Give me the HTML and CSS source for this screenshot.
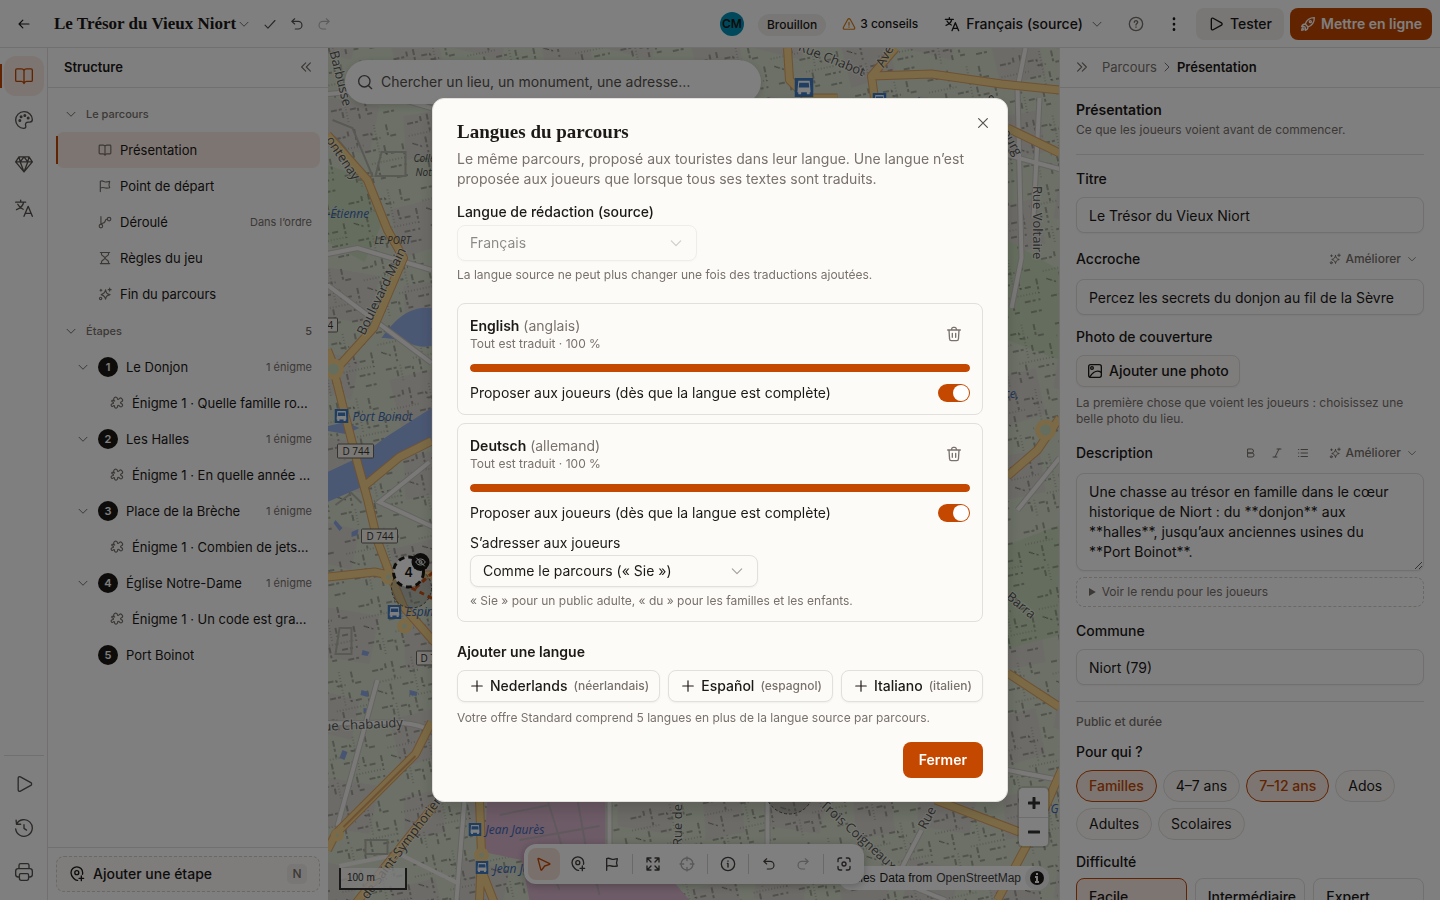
FILE: index.html
```html
<!DOCTYPE html>
<html lang="fr">
<head>
<meta charset="utf-8">
<meta name="viewport" content="width=device-width, initial-scale=1">
<title>Le Trésor du Vieux Niort</title>
<link rel="stylesheet" href="styles.css">
</head>
<body>
<svg class="sprite" aria-hidden="true">
  <symbol id="i-back" viewBox="0 0 24 24"><path d="M20.500 12H3.500M10 5.500L3.500 12l6.500 6.500"/></symbol>
  <symbol id="i-down" viewBox="0 0 24 24"><path d="M4 8.500l8 8 8-8"/></symbol>
  <symbol id="i-right" viewBox="0 0 24 24"><path d="M8 4l8 8-8 8"/></symbol>
  <symbol id="i-check" viewBox="0 0 24 24"><path d="M3.500 14l5 5L20.500 6"/></symbol>
  <symbol id="i-undo" viewBox="0 0 24 24"><path d="M8 3L3 7.500 8 12M3.500 7.500h10.500a6.500 6.500 0 0 1 0 13H9"/></symbol>
  <symbol id="i-redo" viewBox="0 0 24 24"><path d="M16 3l5 4.500L16 12M20.500 7.500H10a6.500 6.500 0 0 0 0 13h5"/></symbol>
  <symbol id="i-book" viewBox="0 0 24 24"><path d="M12 5.500V21M12 5.500C11.500 4 10.500 3.500 9 3.500H3.500a1.500 1.500 0 0 0-1.500 1.500v12a1.500 1.500 0 0 0 1.500 1.500H9c1.800 0 2.500 1 3 2.500.500-1.500 1.200-2.500 3-2.500h5.500A1.500 1.500 0 0 0 22 17V5a1.500 1.500 0 0 0-1.500-1.500H15c-1.500 0-2.500.500-3 2z"/></symbol>
  <symbol id="i-palette" viewBox="0 0 24 24"><path d="M22 11.500C22 6 17.500 2 12 2S2 6.500 2 12s4.500 10 9.500 10c2.500 0 3-1.500 2.500-3-.800-2.500.500-4.500 3-4.500h2c2 0 3-1 3-3z"/><circle cx="7" cy="12.500" r="1"/><circle cx="8.500" cy="8" r="1"/><circle cx="13" cy="6.500" r="1"/><circle cx="17" cy="9.500" r="1"/></symbol>
  <symbol id="i-gem" viewBox="0 0 24 24"><path d="M6 3.500h12l4 6L12 21.500 2 9.500zM2 9.500h20M12 3.500l-4.500 6 4.500 12 4.500-12zM6 3.500l1.500 6M18 3.500l-1.500 6"/></symbol>
  <symbol id="i-lang" viewBox="0 0 24 24"><path d="M2 5h12M8 2.500V5M11.500 5C11 9 7 12.500 3 14M4.500 7.500C6 10.500 8.500 12.500 11 13.500M12 22l5-12 5 12M13.500 18.500h7"/></symbol>
  <symbol id="i-play" viewBox="0 0 24 24"><path d="M5 5v14c0 1.500 1.300 2.300 2.700 1.600l12.500-7c1.300-.700 1.300-2.500 0-3.200L7.700 3.400C6.300 2.700 5 3.500 5 5z"/></symbol>
  <symbol id="i-history" viewBox="0 0 24 24"><path d="M3 7.500A10 10 0 1 1 2 13M2.500 2.500L3 7.500h5M12 8v4.500l3 2"/></symbol>
  <symbol id="i-print" viewBox="0 0 24 24"><path d="M6 8V4c0-1.200.500-2 2-2h8c1.500 0 2 .800 2 2v4M6.500 18H5c-2 0-3-1-3-3v-4c0-2 1-3 3-3h14c2 0 3 1 3 3v4c0 2-1 3-3 3h-1.500M8 14h8c1 0 1.500.500 1.500 1.500v4c0 1.500-.500 2.500-2 2.500h-7c-1.500 0-2-1-2-2.500v-4C6.500 14.500 7 14 8 14z"/></symbol>
  <symbol id="i-dleft" viewBox="0 0 24 24"><path d="M11.500 5l-7 7 7 7M19.500 5l-7 7 7 7"/></symbol>
  <symbol id="i-dright" viewBox="0 0 24 24"><path d="M4.500 5l7 7-7 7M12.500 5l7 7-7 7"/></symbol>
  <symbol id="i-flag" viewBox="0 0 24 24"><path d="M4 21.500V4c4-2.500 7 2 11 1 2-.500 3.500-1 5-1-1.500 4-1.500 7.500 0 11-4 1-6 1-9 0s-5-.500-7 .500"/></symbol>
  <symbol id="i-branch" viewBox="0 0 24 24"><circle cx="5" cy="19" r="3"/><circle cx="19" cy="7" r="3"/><path d="M5 16V2.500M16 7c-3 0-3 .500-3.500 3S10.500 14 5 15"/></symbol>
  <symbol id="i-glass" viewBox="0 0 24 24"><path d="M4 2.500h16M4 21.500h16M6 2.500v3c0 3 6 4 6 6.500s-6 3.500-6 6.500v3M18 2.500v3c0 3-6 4-6 6.500s6 3.500 6 6.500v3"/></symbol>
  <symbol id="i-spark" viewBox="0 0 24 24"><path d="M13 5c1 5 2 6.500 7.500 8C15 14.500 14 16 13 21c-1-5-2.500-6.500-7.500-8C10.500 11.500 12 10 13 5zM20 2v5M17.500 4.500h5M5 4v3M3.500 5.500h3"/><circle cx="4.500" cy="19.500" r="2"/></symbol>
  <symbol id="i-puzzle" viewBox="0 0 24 24"><path d="M8 8.500C6 7 5.500 4 8 2.500s5 .500 5 3c1.500 1 2.500-.500 3.500-1.500 1.500-1.500 3 0 4 1s2 2.500.500 4c-1 1-3 1-3 2.500 0 2 3 1 3.500 3.500.500 2-1.500 4-3.500 3.500-2-.500-2-3-4-2.500-1.500.500-.500 2.500-1.500 3.500s-2.500 2-4 .500c-1.500-1 0-3-1.500-3.500S5 18.500 3.500 18 1.500 15 2.500 14s3-.500 3.500-2-2.500-1.500-3-3 1.500-2 2.500-1.500 1.500 1.500 2.500 1z"/></symbol>
  <symbol id="i-pin" viewBox="0 0 24 24"><path d="M13 21.500C10 22.500 3 16 3 10a8.500 8.500 0 0 1 17.500 0c0 1 0 1.700-.300 2.500M18.500 15v7M15 18.500h7"/><circle cx="11.700" cy="10" r="3"/></symbol>
  <symbol id="i-warn" viewBox="0 0 24 24"><path d="M10 4L2.500 17.500C1.500 19.500 2.500 21 4.500 21h15c2 0 3-1.500 2-3.500L14 4c-1-1.700-3-1.700-4 0zM12 9v5M12 17v.500"/></symbol>
  <symbol id="i-help" viewBox="0 0 24 24"><circle cx="12" cy="12" r="10"/><path d="M9.500 9.500c0-3.500 5.500-3 5 0-.300 1.800-2.500 2-2.500 4M12 16.500v.500"/></symbol>
  <symbol id="i-dots" viewBox="0 0 24 24"><path d="M12 4v.500M12 12v.500M12 20v.500"/></symbol>
  <symbol id="i-rocket" viewBox="0 0 24 24"><path d="M8 12c2-6 7-9.500 13.500-9.500C21.500 9 18 14 12 16.500zM8 12c-3 0-4.500 1-5.500 4 2-.500 3.500-.500 5 .5 1 1.500 1 3 .5 5 3-1 4-2.500 4-5M4.500 18C3 18.500 2.500 20 2.500 21.500c1.500 0 3-.5 3.500-2"/><circle cx="15.500" cy="8.500" r="1.500"/></symbol>
  <symbol id="i-image" viewBox="0 0 24 24"><rect x="2.500" y="2.500" width="19" height="19" rx="3"/><circle cx="7.500" cy="7.500" r="2"/><path d="M4 21c4-6 9-12 17.500-7"/></symbol>
  <symbol id="i-bold" viewBox="0 0 24 24"><path d="M6 4h7a4 4 0 0 1 0 8H6zM6 12h8a4 4 0 0 1 0 8H6z"/></symbol>
  <symbol id="i-italic" viewBox="0 0 24 24"><path d="M12 4h8M8 20L16 4M4 20h8"/></symbol>
  <symbol id="i-list" viewBox="0 0 24 24"><path d="M8 5h13M8 12h13M8 19h13M3 5h.500M3 12h.500M3 19h.500"/></symbol>
  <symbol id="i-search" viewBox="0 0 24 24"><circle cx="11" cy="11" r="8.500"/><path d="M17.500 17.500L22 22"/></symbol>
  <symbol id="i-cursor" viewBox="0 0 24 24"><path d="M4 3.500l16.500 8c.500.300.500 1 0 1.200L13 15l-4.500 6c-.400.500-1 .300-1.200-.200L3 4.500c-.200-.700.300-1.200 1-1z"/></symbol>
  <symbol id="i-expand" viewBox="0 0 24 24"><path d="M3 9V3h6M15 3h6v6M21 15v6h-6M9 21H3v-6M3.500 3.500L9 9M20.500 3.500L15 9M20.500 20.500L15 15M3.500 20.500L9 15"/></symbol>
  <symbol id="i-target" viewBox="0 0 24 24"><circle cx="12" cy="12" r="9"/><path d="M12 1.500V7M12 17v5.500M1.500 12H7M17 12h5.500"/></symbol>
  <symbol id="i-info" viewBox="0 0 24 24"><circle cx="12" cy="12" r="10"/><path d="M12 16.500V11h-1M12 7.500V8"/></symbol>
  <symbol id="i-focus" viewBox="0 0 24 24"><path d="M3 8.500V6c0-2 1-3 3-3h2.500M15.500 3H18c2 0 3 1 3 3v2.500M21 15.500V18c0 2-1 3-3 3h-2.500M8.500 21H6c-2 0-3-1-3-3v-2.500"/><circle cx="12" cy="12" r="3"/></symbol>
  <symbol id="i-close" viewBox="0 0 24 24"><path d="M4.500 4.500l15 15M19.500 4.500l-15 15"/></symbol>
  <symbol id="i-trash" viewBox="0 0 24 24"><path d="M4.500 6l.800 13c.100 2 .800 3 2.700 3h8c1.900 0 2.600-1 2.700-3l.800-13M2.500 6h19M8 6c.500-2.500 1-4 2.500-4h3C15 2 15.500 3.500 16 6M9.500 11v6M14.500 11v6"/></symbol>
  <symbol id="i-plus" viewBox="0 0 24 24"><path d="M12 3v18M3 12h18"/></symbol>
  <symbol id="i-eyeoff" viewBox="0 0 24 24"><path d="M2.500 12c4-8 15-8 19 0-4 8-15 8-19 0zM3.500 3.500l17 17"/><circle cx="12" cy="12" r="3"/></symbol>
  <symbol id="i-bus" viewBox="0 0 20 20"><rect width="20" height="20" fill="#3f7cc4" stroke="none"/><path d="M4 3h12l1 12h-1v2h-3v-2H7v2H4v-2H3z" fill="#fff" stroke="none"/><path d="M5 5h10l.5 5h-11z" fill="#3f7cc4" stroke="none"/></symbol>
</svg>

<div class="app">
  <header class="topbar">
    <button class="tool tool-strong" aria-label="Retour"><svg class="icon i14"><use href="#i-back"/></svg></button>
    <button class="project">Le Trésor du Vieux Niort<svg class="icon i12"><use href="#i-down"/></svg></button>
    <span class="history"><svg class="icon i14"><use href="#i-check"/></svg>
      <button class="plain" aria-label="Annuler"><svg class="icon i14"><use href="#i-undo"/></svg></button>
      <button class="plain faint" aria-label="Rétablir"><svg class="icon i14"><use href="#i-redo"/></svg></button></span>
    <div class="top-actions">
      <span class="avatar">CM</span>
      <span class="status">Brouillon</span>
      <button class="advice"><svg class="icon i14 amber"><use href="#i-warn"/></svg>3 conseils</button>
      <button class="lang"><svg class="icon i16"><use href="#i-lang"/></svg>Français (source)<svg class="icon i12 soft"><use href="#i-down"/></svg></button>
      <button class="tool" aria-label="Aide"><svg class="icon i16"><use href="#i-help"/></svg></button>
      <button class="tool tool-strong dots" aria-label="Plus d’actions"><svg class="icon i16"><use href="#i-dots"/></svg></button>
      <button class="btn secondary"><svg class="icon i16"><use href="#i-play"/></svg>Tester</button>
      <button class="btn primary publish"><svg class="icon i16"><use href="#i-rocket"/></svg>Mettre en ligne</button>
    </div>
  </header>

  <div class="workspace">
    <nav class="rail" aria-label="Sections">
      <button class="rail-btn active" aria-label="Structure"><svg class="icon i20"><use href="#i-book"/></svg></button>
      <button class="rail-btn" aria-label="Apparence"><svg class="icon i20"><use href="#i-palette"/></svg></button>
      <button class="rail-btn" aria-label="Récompenses"><svg class="icon i20"><use href="#i-gem"/></svg></button>
      <button class="rail-btn" aria-label="Langues"><svg class="icon i20"><use href="#i-lang"/></svg></button>
      <div class="rail-end">
        <button class="rail-btn" aria-label="Tester"><svg class="icon i20"><use href="#i-play"/></svg></button>
        <button class="rail-btn" aria-label="Historique"><svg class="icon i20"><use href="#i-history"/></svg></button>
        <button class="rail-btn" aria-label="Imprimer"><svg class="icon i20"><use href="#i-print"/></svg></button>
      </div>
    </nav>

    <aside class="structure">
      <div class="panel-head"><h2>Structure</h2><button class="plain" aria-label="Replier"><svg class="icon i14"><use href="#i-dleft"/></svg></button></div>
      <div class="tree">
        <div class="group">
          <button class="row group-row"><svg class="icon i12"><use href="#i-down"/></svg><span>Le parcours</span></button>
          <button class="row leaf active"><svg class="icon i14"><use href="#i-book"/></svg><span>Présentation</span></button>
          <button class="row leaf"><svg class="icon i14"><use href="#i-flag"/></svg><span>Point de départ</span></button>
          <button class="row leaf"><svg class="icon i14"><use href="#i-branch"/></svg><span>Déroulé</span><small>Dans l’ordre</small></button>
          <button class="row leaf"><svg class="icon i14"><use href="#i-glass"/></svg><span>Règles du jeu</span></button>
          <button class="row leaf"><svg class="icon i14"><use href="#i-spark"/></svg><span>Fin du parcours</span></button>
        </div>
        <div class="group">
          <button class="row group-row"><svg class="icon i12"><use href="#i-down"/></svg><span>Étapes</span><small>5</small></button>
          <button class="row stage"><svg class="icon i12"><use href="#i-down"/></svg><b>1</b><span>Le Donjon</span><small>1 énigme</small></button>
          <button class="row riddle"><svg class="icon i14"><use href="#i-puzzle"/></svg><span>Énigme 1 · Quelle famille royale a construit le donjon ?</span></button>
          <button class="row stage"><svg class="icon i12"><use href="#i-down"/></svg><b>2</b><span>Les Halles</span><small>1 énigme</small></button>
          <button class="row riddle"><svg class="icon i14"><use href="#i-puzzle"/></svg><span>Énigme 1 · En quelle année ont été construites les halles ?</span></button>
          <button class="row stage"><svg class="icon i12"><use href="#i-down"/></svg><b>3</b><span>Place de la Brèche</span><small>1 énigme</small></button>
          <button class="row riddle"><svg class="icon i14"><use href="#i-puzzle"/></svg><span>Énigme 1 · Combien de jets d’eau compte la place ?</span></button>
          <button class="row stage"><svg class="icon i12"><use href="#i-down"/></svg><b>4</b><span>Église Notre-Dame</span><small>1 énigme</small></button>
          <button class="row riddle"><svg class="icon i14"><use href="#i-puzzle"/></svg><span>Énigme 1 · Un code est gravé sur le portail</span></button>
          <button class="row stage last"><b>5</b><span>Port Boinot</span></button>
        </div>
      </div>
      <div class="structure-foot"><button class="add-stage"><svg class="icon i16"><use href="#i-pin"/></svg>Ajouter une étape<kbd>N</kbd></button></div>
    </aside>

    <main class="map">
      <svg class="map-canvas" viewBox="328 48 732 852" preserveAspectRatio="xMidYMid slice" role="img" aria-label="Carte de Niort">
        <defs>
          <pattern id="parcels" width="74" height="66" patternUnits="userSpaceOnUse" patternTransform="rotate(-12)">
            <path d="M3 8h14v-5M24 2v17M31 10h9v6h8M56 4v12h9M4 28l9 5M18 24v16M30 27h14M50 24v9h13M68 26v15M5 46h11v9M24 48h8v11M40 42v14h5M52 47h16M56 58h12" fill="none" stroke="#46453f" stroke-opacity=".75" stroke-width="1" stroke-dasharray="6 2 3 3"/>
            <path d="M2 20h30M44 2v34M34 40h35M20 60V42" fill="none" stroke="#77786f" stroke-opacity=".7" stroke-width="1" stroke-dasharray="1 2"/>
          </pattern>
          <pattern id="blocks" width="150" height="170" patternUnits="userSpaceOnUse">
            <path d="M10 8l50 12-8 40-48-12zM90 40l46-12 10 46-44 14zM20 96l60 10-10 48-52-8zM104 116l36-6 6 42-40 8z" fill="#d9d7cf"/>
          </pattern>
        </defs>
        <rect x="328" y="48" width="732" height="852" fill="#d8e1cd"/>
        <rect x="328" y="48" width="732" height="852" fill="url(#blocks)"/>
        <path d="M328 165l35 12 20 45-18 40-37-20zM1008 545l52-20v110l-52 14zM1008 240l52 30v90l-52-20z" fill="#cbdcbd"/>
        <rect x="328" y="48" width="732" height="852" fill="url(#parcels)"/>
        <path d="M328 472l30-14 30-22 44-28v34l-42 24-30 22-32 14zM328 426l18-4 14 6-14 6-18-3zM382 338c16-22 30-32 50-30v38c-16 4-26-8-50-8z" fill="#96b0e8"/>
        <path d="M362 690l7 2-1 5-7-2zM364 708l8 1-2 4-6-1zM343 750l5 2-3 8-5-2zM410 690l8 2-1 4-7-1zM363 650l7 2-2 4-6-1zM336 520l7 8-3 3-6-8zM352 532l7-3-1 6-6 2z" fill="#8faae4"/>
        <path d="M488 800h118v45h36l48 55H530l-8-40-38-8z" fill="#dbb7ce"/>
        <path d="M500 815l50-10M548 800l14 45M578 800l8 45M520 840l80-14M560 890l-12-30M600 895l-10-40" stroke="#c0b2b9" fill="none" stroke-width="2"/>
        <g fill="none" stroke="#c7c7c3" stroke-width="6"><path d="M328 94l42-4 62 18M328 254l30-6 74 22M328 285l104 78M440 530l-60-28 50-40M1008 155l52 14M1026 48l-8 40 4 170-10 50M1040 98l-6 120M1018 510l42-52M328 723c40 2 80-6 104 8M378 680l-40 146M465 800l-8 100M610 798v50M768 798v50M922 830l-26 50 50 20M1008 770l52 10"/></g>
        <g fill="none" stroke="#f4f3ef" stroke-width="4"><path d="M328 94l42-4 62 18M328 254l30-6 74 22M328 285l104 78M440 530l-60-28 50-40M1008 155l52 14M1026 48l-8 40 4 170-10 50M1040 98l-6 120M1018 510l42-52M328 723c40 2 80-6 104 8M378 680l-40 146M465 800l-8 100M610 798v50M768 798v50M922 830l-26 50 50 20M1008 770l52 10M340 866l60-12 60 30"/></g>
        <path d="M333 120l20 8 20 48-14 4c-4-22-14-36-28-46M376 176h30v-24h-24l-6 24zM340 628h12v26h-16zM336 505l16-12 10 10M366 840h22v14h-22z" fill="none" stroke="#b4b4aa" stroke-width="2"/>
        <g fill="none" stroke="#dda367" stroke-width="9" stroke-linejoin="round"><path d="M328 135l40 45 20 50 16 28-30 70-38 42-8-20M334 369l10 40 14 54 10 36 10 42 12 32 14 34 30 34 10 10M366 485l34-28 32-16M328 577l47-5 14 3 43 0M328 850l8-16 80-80 16-32M355 905l80-100M480 800l2 54-2 46M482 870l14 36M788 48l2 32 18 18h30M896 48l-24 28 4 30M872 76l60-2 70 10 58 6M1008 128l52 25M1008 476l30-26 22-32M1008 673l52 34M936 800l84 32M1062 770l-24 55-40 75"/></g>
        <g fill="none" stroke="#f6d48b" stroke-width="7" stroke-linejoin="round"><path d="M328 135l40 45 20 50 16 28-30 70-38 42-8-20M334 369l10 40 14 54 10 36 10 42 12 32 14 34 30 34 10 10M366 485l34-28 32-16M328 577l47-5 14 3 43 0M328 850l8-16 80-80 16-32M355 905l80-100M480 800l2 54-2 46M482 870l14 36M788 48l2 32 18 18h30M896 48l-24 28 4 30M872 76l60-2 70 10 58 6M1008 128l52 25M1008 476l30-26 22-32M1008 673l52 34M936 800l84 32M1062 770l-24 55-40 75"/></g>
        <path d="M344 827l72-71" stroke="#dda367" stroke-width="2"/>
        <g fill="#cbdcbd" stroke="#f6d48b" stroke-width="5"><circle cx="334" cy="369" r="8"/><circle cx="1046" cy="430" r="8"/><circle cx="389" cy="577" r="5"/><circle cx="405" cy="626" r="5"/><circle cx="482" cy="855" r="5"/><circle cx="338" cy="835" r="4"/></g>
        <circle cx="412" cy="588" r="20" fill="#777" fill-opacity=".3" stroke="#555" stroke-dasharray="3 2"/>
        <circle cx="790" cy="790" r="24" fill="#777" fill-opacity=".3" stroke="#555" stroke-dasharray="3 2"/>
        <path d="M412 588l24 12M416 588l20-18" stroke="#c94f12" stroke-width="3" stroke-dasharray="5 4"/>
        <g class="street">
          <text transform="translate(330 52) rotate(76)">Barbusse</text>
          <text transform="translate(326 140) rotate(56)">ontenay</text>
          <text transform="translate(365 336) rotate(-64)">Boulevard Main</text>
          <text transform="translate(324 731) rotate(-3)">ue Chabaudy</text>
          <text transform="translate(368 900) rotate(-53)">de Saint-Symphorien</text>
          <text transform="translate(682 846) rotate(-90)">Rue de</text>
          <text transform="translate(798 50) rotate(22)">Rue Chabot</text>
          <text transform="translate(884 68) rotate(-62)">Ave</text>
          <text transform="translate(1033 186) rotate(90)">Rue Voltaire</text>
          <text transform="translate(820 806) rotate(42)">Trois Coigneaux</text>
          <text transform="translate(926 830) rotate(-62)">Rue</text>
          <text transform="translate(1006 598) rotate(40)">Barra</text>
          <text transform="translate(984 98) rotate(62)">Strasbourg</text>
          <text x="323" y="789">s</text>
        </g>
        <g class="place"><text x="323" y="218">t-Étienne</text><text x="353" y="421">Port Boinot</text><text x="406" y="616">Espingole</text><text x="486" y="834">Jean Jaurès</text><text x="494" y="873">Jean Jaurès</text><text x="890" y="107">Strasbourg</text><text x="1051" y="813">G</text><text x="994" y="398">erce,</text></g>
        <g class="poi"><text x="375" y="244">LE PORT</text><text x="414" y="162">Collège</text><text x="416" y="176">Notre</text></g>
        <g class="plates"><rect x="338" y="444" width="36" height="14" rx="1"/><rect x="362" y="529" width="36" height="14" rx="1"/><rect x="417" y="651" width="36" height="14" rx="1"/><rect x="302" y="318" width="36" height="14" rx="1"/><text x="343" y="455">D 744</text><text x="367" y="540">D 744</text><text x="421" y="662">D 744</text><text x="328" y="329">4</text></g>
        <use href="#i-bus" x="795" y="78" width="19" height="19"/><use href="#i-bus" x="873" y="93" width="14" height="14"/><use href="#i-bus" x="335" y="409" width="14" height="14"/><use href="#i-bus" x="388" y="605" width="14" height="14"/><use href="#i-bus" x="469" y="823" width="13" height="13"/><use href="#i-bus" x="476" y="861" width="13" height="13"/>
        <circle cx="409" cy="572" r="15" fill="#fff" stroke="#1c1917" stroke-width="3" stroke-dasharray="6 4"/>
        <text class="pin-no" x="409" y="577">4</text>
        <circle cx="421" cy="562" r="9" fill="#1c1917"/>
        <use class="pin-eye" href="#i-eyeoff" x="415" y="556" width="12" height="12"/>
      </svg>
      <label class="search"><svg class="icon i16"><use href="#i-search"/></svg><input type="search" aria-label="Chercher un lieu" placeholder="Chercher un lieu, un monument, une adresse…"></label>
      <div class="attribution"><span>Tiles</span> Data from <a href="#osm">OpenStreetMap</a><button aria-label="Attribution"><svg viewBox="0 0 20 20"><circle cx="10" cy="10" r="7" fill="#1c1917"/><path d="M10 5v2M8 9h2v5M8 14h4" fill="none" stroke="#fff" stroke-width="2"/></svg></button></div>
      <div class="scale">100 m</div>
      <div class="zoom"><button aria-label="Zoomer"><svg viewBox="0 0 12 12"><path d="M6 1v10M1 6h10"/></svg></button><button aria-label="Dézoomer"><svg viewBox="0 0 12 12"><path d="M1 6h10"/></svg></button></div>
      <div class="map-tools" role="toolbar" aria-label="Outils de carte">
        <button class="active" aria-label="Sélectionner"><svg class="icon i16"><use href="#i-cursor"/></svg></button>
        <button aria-label="Ajouter une étape"><svg class="icon i16"><use href="#i-pin"/></svg></button>
        <button aria-label="Point de départ"><svg class="icon i16"><use href="#i-flag"/></svg></button><i></i>
        <button aria-label="Tout afficher"><svg class="icon i16"><use href="#i-expand"/></svg></button>
        <button class="faint" aria-label="Centrer"><svg class="icon i16"><use href="#i-target"/></svg></button><i></i>
        <button aria-label="Informations"><svg class="icon i16"><use href="#i-info"/></svg></button><i></i>
        <button aria-label="Annuler"><svg class="icon i14"><use href="#i-undo"/></svg></button>
        <button class="faint" aria-label="Rétablir"><svg class="icon i14"><use href="#i-redo"/></svg></button><i></i>
        <button aria-label="Mode concentration"><svg class="icon i16"><use href="#i-focus"/></svg></button>
      </div>
    </main>

    <aside class="inspector">
      <div class="panel-head crumbs"><button class="plain" aria-label="Replier"><svg class="icon i14"><use href="#i-dright"/></svg></button><span class="muted">Parcours</span><svg class="icon i12 soft"><use href="#i-right"/></svg><strong>Présentation</strong></div>
      <form class="form">
        <div class="intro"><h3>Présentation</h3><p>Ce que les joueurs voient avant de commencer.</p></div>
        <div class="field"><label for="f-title">Titre</label><input id="f-title" type="text" value="Le Trésor du Vieux Niort"></div>
        <div class="field"><div class="field-head"><label for="f-hook">Accroche</label><button type="button" class="improve"><svg class="icon i12"><use href="#i-spark"/></svg>Améliorer<svg class="icon i10"><use href="#i-down"/></svg></button></div><input id="f-hook" type="text" value="Percez les secrets du donjon au fil de la Sèvre"></div>
        <div class="field photo"><span class="label">Photo de couverture</span><button type="button" class="btn outline"><svg class="icon i16"><use href="#i-image"/></svg>Ajouter une photo</button><p class="hint">La première chose que voient les joueurs : choisissez une belle photo du lieu.</p></div>
        <div class="field"><div class="field-head"><label for="f-desc">Description</label><span class="format"><button type="button" aria-label="Gras"><svg class="icon i12"><use href="#i-bold"/></svg></button><button type="button" aria-label="Italique"><svg class="icon i12"><use href="#i-italic"/></svg></button><button type="button" aria-label="Liste"><svg class="icon i12"><use href="#i-list"/></svg></button></span><button type="button" class="improve"><svg class="icon i12"><use href="#i-spark"/></svg>Améliorer<svg class="icon i10"><use href="#i-down"/></svg></button></div>
          <textarea id="f-desc" rows="4">Une chasse au trésor en famille dans le cœur historique de Niort : du **donjon** aux **halles**, jusqu’aux anciennes usines du **Port Boinot**.</textarea>
          <details><summary>Voir le rendu pour les joueurs</summary></details></div>
        <div class="field"><label for="f-town">Commune</label><input id="f-town" type="text" value="Niort (79)"></div>
        <section class="audience"><h4>Public et durée</h4>
          <span class="label">Pour qui ?</span>
          <div class="chips"><button type="button" class="on" aria-pressed="true">Familles</button><button type="button">4–7 ans</button><button type="button" class="on" aria-pressed="true">7–12 ans</button><button type="button">Ados</button><button type="button">Adultes</button><button type="button">Scolaires</button></div>
          <span class="label">Difficulté</span>
          <div class="levels"><button type="button" class="on" aria-pressed="true">Facile</button><button type="button">Intermédiaire</button><button type="button">Expert</button></div>
        </section>
      </form>
    </aside>
  </div>
</div>

<div class="backdrop">
  <section class="dialog" role="dialog" aria-modal="true" aria-labelledby="dlg-title">
    <button class="close" aria-label="Fermer la fenêtre"><svg class="icon i14"><use href="#i-close"/></svg></button>
    <h1 id="dlg-title">Langues du parcours</h1>
    <p class="lead">Le même parcours, proposé aux touristes dans leur langue. Une langue n’est proposée aux joueurs que lorsque tous ses textes sont traduits.</p>
    <label class="source-label" for="src">Langue de rédaction (source)</label>
    <div class="select source"><select id="src" disabled><option>Français</option></select><svg class="icon i14"><use href="#i-down"/></svg></div>
    <p class="hint">La langue source ne peut plus changer une fois des traductions ajoutées.</p>
    <div class="cards">
      <article class="card">
        <div class="card-head"><div><p class="name"><strong>English</strong> (anglais)</p><p class="hint">Tout est traduit · 100 %</p></div><button aria-label="Supprimer l’anglais"><svg class="icon i16"><use href="#i-trash"/></svg></button></div>
        <div class="bar"><span style="width:100%"></span></div>
        <label class="switch">Proposer aux joueurs (dès que la langue est complète)<input type="checkbox" role="switch" checked></label>
      </article>
      <article class="card">
        <div class="card-head"><div><p class="name"><strong>Deutsch</strong> (allemand)</p><p class="hint">Tout est traduit · 100 %</p></div><button aria-label="Supprimer l’allemand"><svg class="icon i16"><use href="#i-trash"/></svg></button></div>
        <div class="bar"><span style="width:100%"></span></div>
        <label class="switch">Proposer aux joueurs (dès que la langue est complète)<input type="checkbox" role="switch" checked></label>
        <label class="address" for="addr">S’adresser aux joueurs</label>
        <div class="select tone"><select id="addr"><option>Comme le parcours (« Sie »)</option></select><svg class="icon i14"><use href="#i-down"/></svg></div>
        <p class="hint">« Sie » pour un public adulte, « du » pour les familles et les enfants.</p>
      </article>
    </div>
    <h2>Ajouter une langue</h2>
    <div class="add-langs">
      <button class="btn outline"><svg class="icon i14"><use href="#i-plus"/></svg>Nederlands <small>(néerlandais)</small></button>
      <button class="btn outline"><svg class="icon i14"><use href="#i-plus"/></svg>Español <small>(espagnol)</small></button>
      <button class="btn outline"><svg class="icon i14"><use href="#i-plus"/></svg>Italiano <small>(italien)</small></button>
    </div>
    <p class="hint plan">Votre offre Standard comprend 5 langues en plus de la langue source par parcours.</p>
    <div class="dialog-foot"><button class="btn primary">Fermer</button></div>
  </section>
</div>
</body>
</html>
```

FILE: styles.css
```css
:root {
  --ink: #1c1917;
  --muted: #79716b;
  --line: #e2e0dc;
  --accent: #c54800;
  --accent-soft: #f9ebe4;
  --paper: #fcfbf8;
}
* { box-sizing: border-box; }
body {
  margin: 0;
  height: 100vh;
  overflow: hidden;
  font: 14px/20px Inter, "Liberation Sans", sans-serif;
  color: var(--ink);
  background: #fff;
}
h1, h2, h3, h4, p { margin: 0; font-size: inherit; font-weight: inherit; }
button, input, select, textarea { font: inherit; color: inherit; }
button { background: none; border: 0; padding: 0; cursor: pointer; white-space: nowrap; }
.sprite { position: absolute; width: 0; height: 0; }
.icon { fill: none; stroke: currentColor; stroke-width: 2; stroke-linecap: round; stroke-linejoin: round; flex: none; }
.i10 { width: 10px; height: 10px; }
.i12 { width: 12px; height: 12px; }
.i14 { width: 14px; height: 14px; }
.i16 { width: 16px; height: 16px; }
.i20 { width: 20px; height: 20px; stroke-width: 1.6; }
.muted, .soft { color: var(--muted); }
.amber { color: #d97b0c; }
.faint { opacity: .4; }
.plain { display: flex; }

.app { height: 100%; display: flex; flex-direction: column; }
.topbar { height: 48px; flex: none; display: flex; align-items: center; padding: 0 8px; border-bottom: 1px solid var(--line); }
.tool { width: 32px; height: 32px; display: grid; place-items: center; color: var(--muted); }
.tool-strong { color: var(--ink); }
.dots .icon { stroke-width: 4; }
.project { display: flex; align-items: center; gap: 2px; margin-left: 14px; font: 700 17px/24px "Liberation Serif", serif; }
.project .icon { color: var(--muted); }
.history { display: flex; align-items: center; gap: 13px; margin-left: 13px; color: #57534e; }
.top-actions { margin-left: auto; display: flex; align-items: center; }
.avatar { width: 24px; height: 24px; border-radius: 50%; background: #0092b8; display: grid; place-items: center; font-size: 12px; font-weight: 600; margin-right: 14px; }
.status { padding: 0 9px; line-height: 22px; margin-top: 2px; border-radius: 11px; background: #f0eeeb; font-size: 12px; font-weight: 500; margin-right: 16px; }
.advice { display: flex; align-items: center; gap: 4px; font-size: 12px; font-weight: 500; margin-right: 26px; }
.lang { display: flex; align-items: center; gap: 6px; font-weight: 500; margin-right: 17px; }
.lang .soft { margin-left: 2px; }
.tool + .tool { margin-left: 6px; margin-right: 6px; }
.btn { height: 32px; display: inline-flex; align-items: center; gap: 6px; padding: 0 12px; border-radius: 8px; font-weight: 500; }
.secondary { background: #f0eeeb; }
.primary { background: var(--accent); color: #fff; font-weight: 600; }
.publish { margin-left: 6px; padding: 0 10px; gap: 5px; }
.outline { border: 1px solid var(--line); padding: 0 10px; box-shadow: 0 1px 2px rgb(0 0 0 / 5%); background: var(--paper); }

.workspace { flex: 1; min-height: 0; display: flex; }
.rail { width: 48px; flex: none; display: flex; flex-direction: column; gap: 4px; padding: 8px 3px 8px 4px; border-right: 1px solid var(--line); }
.rail-btn { width: 40px; height: 40px; border-radius: 12px; display: grid; place-items: center; color: #57534e; }
.rail-btn.active { background: var(--accent-soft); color: var(--accent); position: relative; }
.rail-btn.active::before { content: ""; position: absolute; left: -4px; top: 8px; width: 2px; height: 24px; background: var(--accent); }
.rail-end { margin-top: auto; padding-top: 8px; border-top: 1px solid var(--line); display: flex; flex-direction: column; gap: 4px; }

.structure { width: 280px; flex: none; display: flex; flex-direction: column; }
.panel-head { height: 40px; flex: none; display: flex; align-items: center; justify-content: space-between; padding: 0 15px 1px 16px; border-bottom: 1px solid var(--line); font-size: 13px; }
.panel-head h2, .panel-head strong { font-weight: 600; }
.panel-head .plain { color: var(--muted); }
.tree { flex: 1; min-height: 0; padding: 8px; display: flex; flex-direction: column; gap: 1px; }
.group { display: flex; flex-direction: column; }
.row { width: 100%; height: 36px; display: flex; align-items: center; gap: 8px; padding: 0 8px 1px; text-align: left; font-size: 13px; border-radius: 8px; }
.row .icon { color: var(--muted); }
.row span { overflow: hidden; text-overflow: ellipsis; }
.row small { margin-left: auto; font-size: 11px; color: var(--muted); }
.group-row { font-size: 11px; font-weight: 500; color: var(--muted); padding-left: 9px; gap: 9px; }
.leaf { padding-left: 42px; }
.leaf.active { background: var(--accent-soft); position: relative; }
.leaf.active::before { content: ""; position: absolute; left: 0; top: 4px; bottom: 4px; width: 2px; background: var(--accent); }
.stage { padding-left: 21px; }
.stage b { width: 20px; height: 20px; flex: none; margin-left: 1px; border-radius: 50%; display: grid; place-items: center; background: var(--ink); color: #fff; font-size: 11px; font-weight: 600; }
.stage.last { padding-left: 41px; }
.riddle { padding-left: 54px; }
.structure-foot { border-top: 1px solid var(--line); padding: 8px; }
.add-stage { width: 100%; height: 36px; display: flex; align-items: center; gap: 8px; padding: 0 12px; border: 1px dashed #d5d1cb; border-radius: 8px; background: var(--paper); font-weight: 500; }
.add-stage kbd { margin-left: auto; width: 20px; border-radius: 5px; text-align: center; background: #f0eeeb; color: var(--muted); font: inherit; font-size: 12px; }

.map { flex: 1; min-width: 0; position: relative; overflow: hidden; background: #d8e1cd; }
.map-canvas { display: block; width: 100%; height: 100%; }
.street { font: 13px "Open Sans", "Noto Sans", sans-serif; fill: #555450; stroke: #fff; stroke-opacity: .45; stroke-width: 2px; paint-order: stroke; }
.place { font: italic 12px "Open Sans", "Noto Sans", sans-serif; fill: #3c69ba; }
.poi { font: italic 10px "Open Sans", "Noto Sans", sans-serif; fill: #4d4d4d; }
.plates { font: 10px "Open Sans", "Noto Sans", sans-serif; fill: #33322f; }
.plates rect { fill: #f3f1ea; stroke: #66645e; }
.pin-no { font-weight: 600; font-size: 13px; text-anchor: middle; fill: var(--ink); }
.pin-eye { fill: none; stroke: #fff; stroke-width: 2; }
.search { position: absolute; left: 17px; top: 12px; width: 416px; max-width: calc(100% - 34px); height: 44px; border-radius: 22px; background: #fff; display: flex; align-items: center; gap: 8px; padding: 0 12px; box-shadow: 0 2px 6px rgb(0 0 0 / 15%); }
.search .icon { color: #57534e; }
.search input { flex: 1; min-width: 0; border: 0; background: none; padding: 0; outline: 0; }
.search input::placeholder { color: #57534e; opacity: 1; }
.attribution { position: absolute; right: 10px; bottom: 10px; height: 24px; border-radius: 12px; background: #fff; display: flex; align-items: center; gap: 4px; padding: 0 0 0 12px; font: 12px/20px "Liberation Sans", sans-serif; }
.attribution a { color: #3f3f3f; text-decoration: none; }
.attribution button { width: 24px; height: 24px; border-radius: 50%; background: #eee; display: grid; place-items: center; }
.attribution button svg { width: 20px; height: 20px; }
.scale { position: absolute; left: 11px; bottom: 10px; width: 68px; height: 22px; border: 2px solid #333; border-top: 0; background: rgb(255 255 255 / 75%); font: 10px/19px "Liberation Sans", sans-serif; padding-left: 6px; color: #333; }
.zoom { position: absolute; right: 11px; bottom: 54px; width: 29px; border-radius: 4px; background: #fff; box-shadow: 0 0 0 2px rgb(0 0 0 / 10%); }
.zoom button { width: 29px; height: 29px; display: grid; place-items: center; }
.zoom button + button { border-top: 1px solid #ddd; }
.zoom svg { width: 12px; height: 12px; stroke: #333; stroke-width: 3; stroke-linecap: round; }
.map-tools { position: absolute; left: 50%; bottom: 16px; transform: translateX(-50%); display: flex; align-items: center; gap: 2px; padding: 4px; border-radius: 12px; background: #fff; box-shadow: 0 2px 8px rgb(0 0 0 / 25%); }
.map-tools button { width: 32px; height: 32px; border-radius: 8px; display: grid; place-items: center; color: #44403c; }
.map-tools button.active { background: #f5e1d6; color: var(--accent); }
.map-tools i { width: 1px; height: 20px; margin: 0 2px; background: #d6d3d1; }

.inspector { width: 381px; flex: none; border-left: 1px solid var(--line); display: flex; flex-direction: column; overflow: hidden; }
.crumbs { justify-content: flex-start; gap: 4px; }
.inspector .panel-head { padding-left: 15px; }
.crumbs .muted { margin-left: 9px; }
.form { padding: 12px 16px 0; flex: none; }
.intro { padding-bottom: 14px; border-bottom: 1px solid var(--line); margin-bottom: 14px; }
.intro h3 { font-weight: 600; }
.intro p, .form .hint { color: var(--muted); font-size: 12px; }
.form .hint { line-height: 16px; }
.field { display: flex; flex-direction: column; gap: 8px; margin-bottom: 14px; }
.field label, .label { font-weight: 500; display: block; }
.field-head { display: flex; align-items: center; justify-content: space-between; height: 24px; }
.field input { width: 100%; height: 36px; border: 1px solid var(--line); border-radius: 8px; padding: 0 12px; background: #fff; box-shadow: 0 1px 2px rgb(0 0 0 / 5%); }
.improve { display: flex; align-items: center; gap: 4px; padding-right: 7px; font-size: 12px; font-weight: 500; color: var(--muted); }
.improve .i10 { margin-left: 2px; }
.format { margin-left: auto; margin-right: 20px; display: flex; gap: 14px; color: var(--muted); }
.format button { display: flex; }
.photo .label { line-height: 16px; padding-bottom: 2px; }
.photo .btn { align-self: flex-start; gap: 6px; }
.field textarea { display: block; width: 100%; height: 98px; border: 1px solid var(--line); border-radius: 8px; padding: 8px 16px 8px 12px; background: #fff; resize: vertical; overflow: hidden; box-shadow: 0 1px 2px rgb(0 0 0 / 5%); }
.field details { margin-top: -2px; border: 1px dashed #d5d1cb; border-radius: 8px; padding: 0 12px; font-size: 12px; line-height: 28px; color: var(--muted); }
.audience { margin-top: 16px; border-top: 1px solid var(--line); padding-top: 12px; }
.audience h4 { font-size: 12px; line-height: 16px; font-weight: 500; color: var(--muted); margin-bottom: 12px; }
.chips { display: flex; flex-wrap: wrap; gap: 6px; margin: 8px 0 12px; }
.chips button { height: 32px; padding: 0 12px; border: 1px solid var(--line); border-radius: 16px; background: var(--paper); }
.levels { display: grid; grid-template-columns: repeat(3, 1fr); gap: 8px; margin-top: 6px; }
.levels button { min-width: 0; height: 56px; padding: 8px 12px 0; border: 1px solid var(--line); border-radius: 8px; text-align: left; display: flex; font-weight: 500; }
.chips .on { color: var(--accent); font-weight: 500; }
.chips .on.on, .levels .on { border-color: var(--accent); background: var(--accent-soft); }

.backdrop { position: fixed; inset: 0; background: rgb(0 0 0 / 50%); display: grid; place-items: center; }
.dialog { position: relative; width: 576px; max-width: calc(100% - 32px); padding: 24px 24px 23px; border: 1px solid var(--line); border-radius: 12px; background: var(--paper); box-shadow: 0 8px 16px rgb(0 0 0 / 15%); }
.close { position: absolute; top: 16px; right: 16px; width: 16px; height: 16px; display: grid; place-items: center; color: #57534e; }
.dialog h1 { font: 700 19px/18px "Liberation Serif", serif; margin-bottom: 8px; }
.lead { color: var(--muted); margin-bottom: 14px; }
.source-label { display: block; font-weight: 500; line-height: 18px; margin-bottom: 4px; }
.dialog .hint { font-size: 12px; line-height: 16px; color: var(--muted); }
.select { display: grid; align-items: center; max-width: 100%; margin-bottom: 6px; }
.select select, .select .icon { grid-area: 1 / 1; }
.select select { appearance: none; width: 100%; height: 100%; border: 1px solid var(--line); border-radius: 8px; padding: 0 32px 0 12px; background: var(--paper); box-shadow: 0 1px 2px rgb(0 0 0 / 5%); }
.select .icon { justify-self: end; margin-right: 14px; color: #a6a09b; pointer-events: none; }
.source { width: 240px; height: 36px; opacity: .5; }
.source select { opacity: 1; }
.tone { width: 288px; height: 32px; }
.cards { display: flex; flex-direction: column; gap: 8px; margin: 20px 0; }
.card { border: 1px solid var(--line); border-radius: 8px; padding: 12px; }
.card:first-child { padding-bottom: 11px; }
.card-head { display: flex; align-items: center; justify-content: space-between; margin-bottom: 12px; }
.card-head button { width: 32px; height: 32px; display: grid; place-items: center; color: var(--muted); }
.name { color: var(--muted); }
.name strong { font-weight: 600; color: var(--ink); }
.bar { height: 8px; border-radius: 4px; background: #f0eeeb; overflow: hidden; margin-bottom: 11px; }
.bar span { display: block; height: 100%; border-radius: 4px; background: var(--accent); }
.switch { display: flex; align-items: center; justify-content: space-between; }
.switch input { appearance: none; margin: 0; width: 32px; height: 18px; border-radius: 9px; background: var(--accent); display: flex; justify-content: flex-end; padding: 1px; }
.switch input::before { content: ""; width: 16px; height: 16px; border-radius: 50%; background: #fff; }
.address { display: block; margin: 10px 0 2px; }
.dialog h2 { font-weight: 600; margin-bottom: 8px; }
.add-langs { display: flex; flex-wrap: wrap; gap: 8px; margin-bottom: 8px; }
.add-langs .btn { padding: 0 10px 0 12px; }
.add-langs small { font-size: 12px; color: var(--muted); }
.dialog-foot { display: flex; justify-content: flex-end; margin-top: 16px; }
.dialog-foot .btn { height: 36px; padding: 0 16px; }
```
